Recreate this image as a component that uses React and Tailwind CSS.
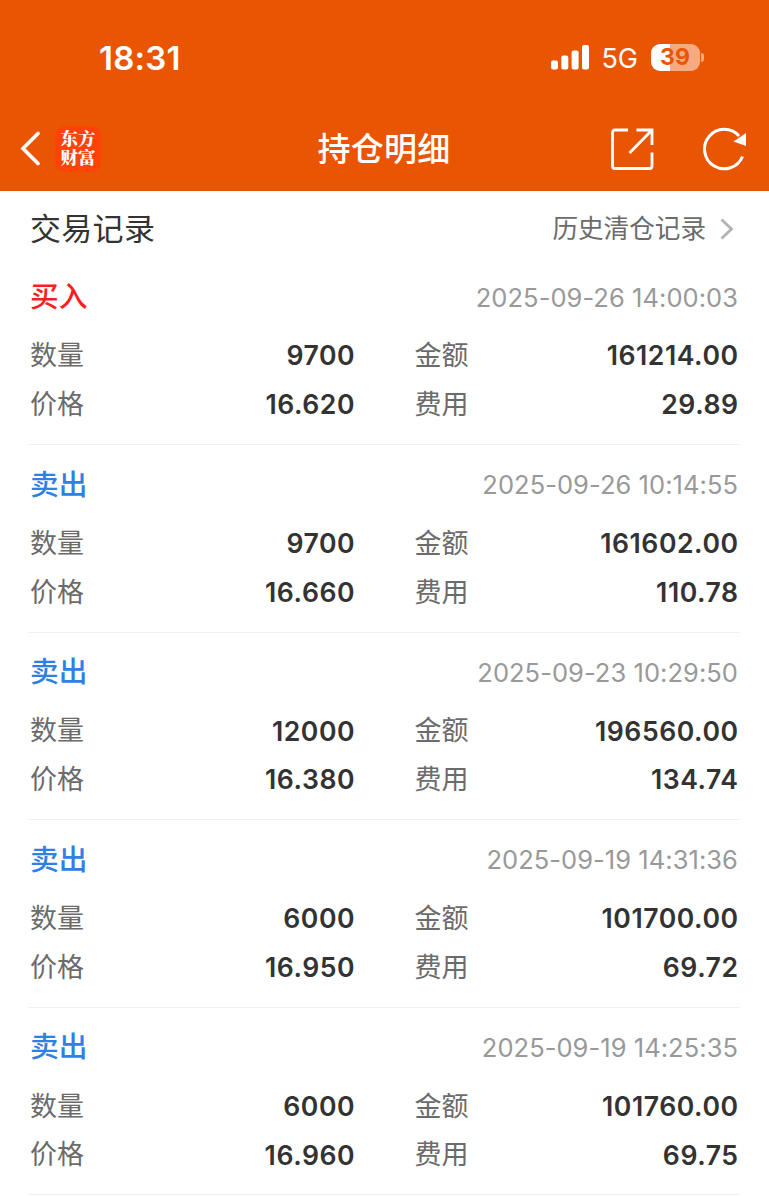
import React from 'react';

// 交易记录数据
const records = [
  { id: 1, type: '买入', time: '2025-09-26 14:00:03', count: '9700', amount: '161214.00', price: '16.620', fee: '29.89' },
  { id: 2, type: '卖出', time: '2025-09-26 10:14:55', count: '9700', amount: '161602.00', price: '16.660', fee: '110.78' },
  { id: 3, type: '卖出', time: '2025-09-23 10:29:50', count: '12000', amount: '196560.00', price: '16.380', fee: '134.74' },
  { id: 4, type: '卖出', time: '2025-09-19 14:31:36', count: '6000', amount: '101700.00', price: '16.950', fee: '69.72' },
  { id: 5, type: '卖出', time: '2025-09-19 14:25:35', count: '6000', amount: '101760.00', price: '16.960', fee: '69.75' },
];

const App = () => {
  return (
    <div className="h-[1196px] w-[769px] overflow-hidden bg-white font-['Inter','Noto_Sans_CJK_SC',sans-serif] text-[#333333]">
      <header className="h-[191px] bg-[#ea5504] text-white">
        <StatusBar />
        <NavBar />
      </header>

      <main className="pl-[30px] pr-[31px]">
        <div className="flex h-[66.4px] items-center justify-between pt-[9px]">
          <h2 className="text-[31px] leading-none tracking-[0.3px]">交易记录</h2>
          <button className="flex items-center text-[25.6px] leading-none text-[#6b6b6b]">
            历史清仓记录
            <svg className="ml-[14px] mr-[4px]" width="14" height="22" viewBox="0 0 14 22" fill="none" stroke="#b2b2b2" strokeWidth="2.8">
              <path d="M1.5 1.5 11.5 11 1.5 20.5" />
            </svg>
          </button>
        </div>

        {records.map(record => (
          <RecordItem key={record.id} record={record} />
        ))}
      </main>
    </div>
  );
};

// 顶部状态栏
const StatusBar = () => (
  <div className="flex h-[114px] items-center pl-[99px] pr-[65px]">
    <span className="pt-[2px] text-[33px] font-semibold leading-none tracking-[0.2px]">18:31</span>
    <svg className="ml-auto" width="38" height="25" viewBox="0 0 38 25" fill="#fff">
      <rect x="0" y="15.5" width="7" height="9" rx="2" />
      <rect x="10.3" y="10.5" width="7" height="14" rx="2" />
      <rect x="20.6" y="5.5" width="7" height="19" rx="2" />
      <rect x="31" y="0" width="7" height="24.5" rx="2" />
    </svg>
    <span className="ml-[12px] pt-[3px] text-[27px] leading-none">5G</span>
    <div className="ml-[13px] flex items-center">
      <div className="flex h-[27px] w-[49px] items-center justify-center rounded-[9px] bg-linear-to-r from-white from-[39%] to-[#f5aa82] to-[39%] pr-[1px] pt-[1px] text-[23px] font-bold leading-none text-[#ea5504]">
        39
      </div>
      <div className="ml-[1px] h-[9px] w-[3px] rounded-r-full bg-[#f5aa82]" />
    </div>
  </div>
);

// 导航栏
const NavBar = () => (
  <div className="flex h-[69px] items-center pl-[19px] pr-[22px]">
    <div className="flex w-[240px] items-center">
      <svg width="22" height="36" viewBox="0 0 22 36" fill="none" stroke="#fff" strokeWidth="3.6" strokeLinecap="round">
        <path d="M19 2.500 4 17.500 19 32.500" strokeLinejoin="miter" />
      </svg>
      <div className="ml-[14px] flex h-[46px] w-[46px] items-center justify-center rounded-[10px] bg-[#ff4206] pb-[3px]">
        <span className="w-[35px] break-all font-['Noto_Serif_CJK_SC','Noto_Sans_CJK_SC',serif] text-[17.5px] font-black leading-[19.5px]">东方财富</span>
      </div>
    </div>
    <h1 className="flex-1 pl-[2px] pt-[2px] text-center text-[33px] font-medium leading-none tracking-[0.3px]">持仓明细</h1>
    <div className="flex w-[240px] items-center justify-end">
      <svg width="44" height="44" viewBox="0 0 44 44" fill="none" stroke="#fff" strokeWidth="2.8">
        <path d="M18 3H5Q2.500 3 2.500 5.500V39Q2.500 41.500 5 41.500H39.500Q42 41.500 42 39V25.500" />
        <path d="M26.500 3H42V18M42 3 19.500 26" />
      </svg>
      <svg className="ml-[47px]" width="46" height="44" viewBox="0 0 46 44" fill="none">
        <path d="M41.500 29.500A19.700 19.700 0 1 1 38 9" stroke="#fff" strokeWidth="3" />
        <path d="M45 6V19L32.500 14.500Z" fill="#fff" />
      </svg>
    </div>
  </div>
);

// 单条买卖记录
const RecordItem = ({ record }) => (
  <div className="-ml-[2px] -mr-[2px] h-[187.6px] border-b border-[#f0f0f0] pl-[2px] pr-[2px] pt-[15px]">
    <div className="flex h-[50px] items-center justify-between">
      <span className={`text-[28.7px] font-medium leading-none ${record.type === '买入' ? 'text-[#fa1e1e]' : 'text-[#2f80e6]'}`}>
        {record.type}
      </span>
      <span className="text-[25.5px] leading-none tracking-[0.05px] text-[#999999]">{record.time}</span>
    </div>
    <div className="mt-[9px] grid grid-cols-[324.5px_1fr] gap-x-[60px]">
      <Field label="数量" value={record.count} />
      <Field label="金额" value={record.amount} />
      <Field label="价格" value={record.price} />
      <Field label="费用" value={record.fee} />
    </div>
  </div>
);

const Field = ({ label, value }) => (
  <div className="flex h-[48.7px] items-center justify-between leading-none">
    <span className="text-[27px] text-[#6b6b6b]">{label}</span>
    <span className="-mr-[0.6px] text-[26.6px] font-semibold tracking-[0.55px]">{value}</span>
  </div>
);

export default App;
